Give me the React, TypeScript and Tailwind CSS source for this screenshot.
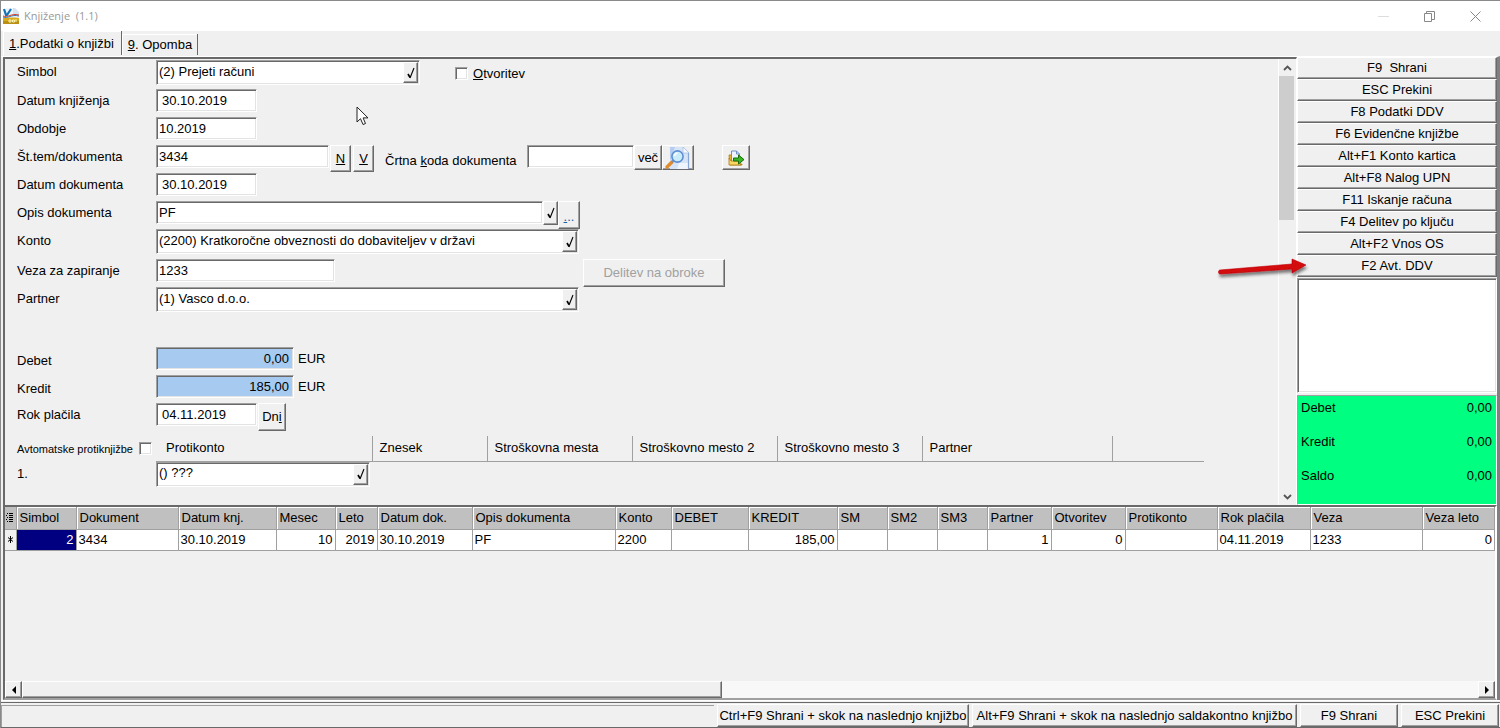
import type { ReactNode } from 'react';

const sunken =
  'border border-t-[#a0a0a0] border-l-[#a0a0a0] border-r-white border-b-white shadow-[inset_1px_1px_0_#696969,inset_-1px_-1px_0_#e3e3e3]';
const raised =
  'border border-t-white border-l-white border-r-[#696969] border-b-[#696969] shadow-[inset_-1px_-1px_0_#a0a0a0] bg-[#f0f0f0]';

const actions = [
  'F9  Shrani',
  'ESC Prekini',
  'F8 Podatki DDV',
  'F6 Evidenčne knjižbe',
  'Alt+F1 Konto kartica',
  'Alt+F8 Nalog UPN',
  'F11 Iskanje računa',
  'F4 Delitev po ključu',
  'Alt+F2 Vnos OS',
  'F2 Avt. DDV',
];

const totals = [
  { label: 'Debet', value: '0,00' },
  { label: 'Kredit', value: '0,00' },
  { label: 'Saldo', value: '0,00' },
];

const columns = [
  { title: 'Simbol', value: '2', width: 'w-[60px]', right: true },
  { title: 'Dokument', value: '3434', width: 'w-[102px]' },
  { title: 'Datum knj.', value: '30.10.2019', width: 'w-[98px]' },
  { title: 'Mesec', value: '10', width: 'w-[59px]', right: true },
  { title: 'Leto', value: '2019', width: 'w-[42px]', right: true },
  { title: 'Datum dok.', value: '30.10.2019', width: 'w-[95px]' },
  { title: 'Opis dokumenta', value: 'PF', width: 'w-[143px]' },
  { title: 'Konto', value: '2200', width: 'w-[56px]' },
  { title: 'DEBET', value: '', width: 'w-[77px]' },
  { title: 'KREDIT', value: '185,00', width: 'w-[89px]', right: true },
  { title: 'SM', value: '', width: 'w-[50px]' },
  { title: 'SM2', value: '', width: 'w-[50px]' },
  { title: 'SM3', value: '', width: 'w-[50px]' },
  { title: 'Partner', value: '1', width: 'w-[64px]', right: true },
  { title: 'Otvoritev', value: '0', width: 'w-[74px]', right: true },
  { title: 'Protikonto', value: '', width: 'w-[92px]' },
  { title: 'Rok plačila', value: '04.11.2019', width: 'w-[93px]' },
  { title: 'Veza', value: '1233', width: 'w-[112px]' },
  { title: 'Veza leto', value: '0', width: 'w-auto', right: true },
];

const counterColumns = [
  { title: 'Protikonto', width: 'w-[216px]' },
  { title: 'Znesek', width: 'w-[115px]' },
  { title: 'Stroškovna mesta', width: 'w-[145px]' },
  { title: 'Stroškovno mesto 2', width: 'w-[145px]' },
  { title: 'Stroškovno mesto 3', width: 'w-[145px]' },
  { title: 'Partner', width: 'w-[190px]' },
];

function AppIcon() {
  return (
    <svg width="16" height="16" viewBox="0 0 16 16" aria-hidden="true">
      <path d="M3 0h9l4 4v9H0V5z" fill="#eef4fa" />
      <path d="M10 0h2l4 4v3h-6z" fill="#d5e3f1" />
      <path d="M1 1l2 6h1l4-6" fill="none" stroke="#1273b8" strokeWidth="2.2" />
      <path d="M0 10c5 0 8-1 16 0v6H0z" fill="#d7ab1c" />
      <path d="M0 13h16v3H0z" fill="#b98f14" />
      <path d="M0 9c5 2 8-3 16-1" fill="none" stroke="#2d74b5" strokeWidth="1" />
      <path d="M0 8c5 2 8-3 16-1" fill="none" stroke="#d8402a" strokeWidth="1" />
      <path d="M6 12h2v2H6zM9.500 12h2v2h-2zM13 11v3" fill="none" stroke="#fff3b0" strokeWidth="1" />
    </svg>
  );
}

function CheckIcon() {
  return (
    <svg width="8" height="12" viewBox="0 0 8 12" aria-hidden="true">
      <path d="M1 7l2 3.5" fill="none" stroke="#000" strokeWidth="1.6" />
      <path d="M3 11L7 1" fill="none" stroke="#000" strokeWidth="1.1" />
    </svg>
  );
}

function MagnifierIcon() {
  return (
    <svg width="26" height="22" viewBox="0 0 26 22" aria-hidden="true">
      <path d="M5 0h14l5 5v17H5z" fill="#d6e4f8" />
      <path d="M5 0h5L5 14z" fill="#b4cdf0" />
      <path d="M18 0l6 6h-6z" fill="#f7faff" stroke="#9bb4dc" strokeWidth="0.6" />
      <path d="M14 16h9v6H12z" fill="#f0f5fd" />
      <path d="M23.500 6v16" stroke="#8aa6d6" strokeWidth="1.2" />
      <path d="M2 20l5-5" stroke="#e08a2c" strokeWidth="3.2" strokeLinecap="round" />
      <path d="M7 15l2-2" stroke="#7f8ba3" strokeWidth="2" />
      <circle cx="12.500" cy="9.500" r="5.600" fill="#c9ecfb" stroke="#5f8fd0" strokeWidth="1.6" />
      <path d="M9.500 9a3.500 3.500 0 0 1 3-3" fill="none" stroke="#fff" strokeWidth="1.5" />
    </svg>
  );
}

function ExportIcon() {
  return (
    <svg width="17" height="16" viewBox="0 0 17 16" aria-hidden="true">
      <path d="M1 5h3v9h10v1H2z" fill="#e8b52e" stroke="#a97a10" strokeWidth="0.8" />
      <path d="M3.500 1h5l3 3v9h-8z" fill="#eef4ff" stroke="#6f8fc8" strokeWidth="1" />
      <path d="M8.500 1v3h3" fill="none" stroke="#6f8fc8" strokeWidth="1" />
      <path d="M1 15V8l2 3h8l2 4z" fill="#f8d663" stroke="#a97a10" strokeWidth="0.8" />
      <path d="M5.500 8h5V5l5.500 4.600L10.500 14v-3h-5z" fill="#37b822" stroke="#176b0c" strokeWidth="1" />
    </svg>
  );
}

type RowProps = { id: string; label: string; height?: string; low?: boolean; children: ReactNode };

function Row({ id, label, height = 'h-7', low, children }: RowProps) {
  return (
    <div className={`flex items-start ${height}`}>
      <label htmlFor={id} className={`w-[139px] shrink-0 ${low ? 'leading-7' : 'leading-[23px]'}`}>
        {label}
      </label>
      {children}
    </div>
  );
}

type FieldProps = { id: string; value: string; width: string; className?: string; label?: string };

function Field({ id, value, width, className = 'bg-white px-1', label }: FieldProps) {
  return (
    <input
      id={id}
      aria-label={label}
      defaultValue={value}
      className={`h-[23px] shrink-0 outline-none ${sunken} ${width} ${className}`}
    />
  );
}

function Lookup({ id, value, width, label }: FieldProps) {
  return (
    <div className={`flex h-[25px] shrink-0 bg-white p-px ${sunken} ${width}`}>
      <input
        id={id}
        aria-label={label}
        defaultValue={value}
        className="h-[19px] min-w-0 flex-1 bg-transparent px-px outline-none"
      />
      <button aria-label="Izberi" className={`flex w-[15px] items-center justify-center ${raised}`}>
        <CheckIcon />
      </button>
    </div>
  );
}

function TitleBar() {
  return (
    <header className="flex h-[31px] shrink-0 items-center border-t border-[#8a8a8a] bg-white pr-[2px] pl-[2px]">
      <AppIcon />
      <h1 className="ml-[5px] flex-1 font-['Open_Sans',sans-serif] text-[11px] whitespace-pre text-[#999]">
        {'Knjiženje  (1.1)'}
      </h1>
      <button aria-label="Pomanjšaj" className="flex h-full w-[46px] items-center justify-center">
        <svg width="11" height="11" viewBox="0 0 11 11">
          <path d="M0 5.5h11" stroke="#ddd" />
        </svg>
      </button>
      <button aria-label="Obnovi" className="flex h-full w-[46px] items-center justify-center">
        <svg width="11" height="11" viewBox="0 0 11 11" fill="none" stroke="#888">
          <path d="M.5 2.5h7v8h-7zM2.5 2.5v-2h8v8h-3" />
        </svg>
      </button>
      <button aria-label="Zapri" className="flex h-full w-[46px] items-center justify-center">
        <svg width="11" height="11" viewBox="0 0 11 11" stroke="#888">
          <path d="M.5.5l10 10M10.5.5l-10 10" />
        </svg>
      </button>
    </header>
  );
}

function Tabs() {
  return (
    <nav className="flex h-[25px] shrink-0 items-end pb-px pl-[2px]" role="tablist">
      <button
        role="tab"
        aria-selected="true"
        className="h-6 border-t border-l border-white pr-[7px] pl-[5px] shadow-[1px_0_0_#696969]"
      >
        <u>1</u>.Podatki o knjižbi
      </button>
      <button
        role="tab"
        aria-selected="false"
        className="ml-px h-[21px] border-t border-l border-white pr-[5px] pl-[5px] shadow-[1px_0_0_#696969]"
      >
        <u>9</u>. Opomba
      </button>
    </nav>
  );
}

function EntryForm() {
  return (
    <div className="min-w-0 flex-1 pt-px pl-3">
      <Row id="simbol" label="Simbol" height="h-[29px]">
        <Lookup id="simbol" value="(2) Prejeti računi" width="w-[264px]" />
        <label className="ml-[35px] flex h-[27px] items-center gap-[5px]">
          <input type="checkbox" className={`size-[13px] appearance-none bg-white ${sunken}`} />
          <span>
            <u>O</u>tvoritev
          </span>
        </label>
      </Row>
      <Row id="datum-knj" label="Datum knjiženja">
        <Field id="datum-knj" value="30.10.2019" width="w-[101px]" className="bg-white px-[5px]" />
      </Row>
      <Row id="obdobje" label="Obdobje">
        <Field id="obdobje" value="10.2019" width="w-[101px]" className="bg-white px-[2px]" />
      </Row>
      <Row id="stevilka" label="Št.tem/dokumenta">
        <Field id="stevilka" value="3434" width="w-[173px]" className="bg-white px-[2px]" />
        <button className={`ml-px h-[27px] w-[21px] ${raised}`}>
          <u>N</u>
        </button>
        <button className={`ml-[2px] h-[27px] w-[21px] ${raised}`}>
          <u>V</u>
        </button>
        <label htmlFor="crtna" className="ml-[11px] w-[142px] leading-[31px]">
          Črtna <u>k</u>oda dokumenta
        </label>
        <Field id="crtna" value="" width="w-[107px]" />
        <button className={`h-[25px] w-7 ${raised}`}>več</button>
        <button aria-label="Išči dokument" className={`flex h-[25px] w-8 items-center justify-center ${raised}`}>
          <MagnifierIcon />
        </button>
        <button aria-label="Odpri dokument" className={`ml-7 flex h-[25px] w-7 items-center justify-center ${raised}`}>
          <ExportIcon />
        </button>
      </Row>
      <Row id="datum-dok" label="Datum dokumenta">
        <Field id="datum-dok" value="30.10.2019" width="w-[101px]" className="bg-white px-[5px]" />
      </Row>
      <Row id="opis" label="Opis dokumenta">
        <Field id="opis" value="PF" width="w-[387px]" className="bg-white px-[2px]" />
        <button aria-label="Izberi opis" className={`flex h-6 w-[15px] items-center justify-center ${raised}`}>
          <CheckIcon />
        </button>
        <button aria-label="Več o opisu" className={`h-7 w-[22px] pt-1 text-[#1a5fa8] ${raised}`}>
          <u>.</u>..
        </button>
      </Row>
      <Row id="konto" label="Konto" height="h-[30px]">
        <Lookup id="konto" value="(2200) Kratkoročne obveznosti do dobaviteljev v državi" width="w-[423px]" />
      </Row>
      <Row id="veza" label="Veza za zapiranje">
        <Field id="veza" value="1233" width="w-[179px]" className="bg-white px-[2px]" />
        <button disabled className={`ml-[248px] h-7 w-[142px] text-[#a0a0a0] ${raised}`}>
          Delitev na obroke
        </button>
      </Row>
      <Row id="partner" label="Partner" height="h-[60px]">
        <Lookup id="partner" value="(1) Vasco d.o.o." width="w-[423px]" />
      </Row>
      <Row id="debet" label="Debet" low>
        <Field id="debet" value="0,00" width="w-[138px]" className="bg-[#a6caf0] px-1 text-right" />
        <span className="ml-1 leading-[23px]">EUR</span>
      </Row>
      <Row id="kredit" label="Kredit" low>
        <Field id="kredit" value="185,00" width="w-[138px]" className="bg-[#a6caf0] px-1 text-right" />
        <span className="ml-1 leading-[23px]">EUR</span>
      </Row>
      <Row id="rok" label="Rok plačila" height="h-[33px]">
        <Field id="rok" value="04.11.2019" width="w-[101px]" className="bg-white px-[5px]" />
        <button className={`ml-px h-7 w-7 ${raised}`}>
          Dn<u>i</u>
        </button>
      </Row>
      <CounterEntries />
    </div>
  );
}

function CounterEntries() {
  return (
    <table className="w-[1187px] table-fixed border-collapse text-left">
      <thead>
        <tr className="h-[25px]">
          <th className="w-[139px] p-0 font-normal">
            <label className="flex items-center justify-between pr-1 text-[11px] whitespace-nowrap">
              Avtomatske protiknjižbe
              <input type="checkbox" className={`size-[13px] appearance-none bg-white ${sunken}`} />
            </label>
          </th>
          {counterColumns.map((column) => (
            <th
              key={column.title}
              className={`border-r border-b border-[#a0a0a0] py-0 pr-0 font-normal whitespace-nowrap ${column.width} ${
                column.title === 'Protikonto' ? 'pl-[10px]' : 'pl-[7px]'
              }`}
            >
              {column.title}
            </th>
          ))}
          <th className="border-b border-[#a0a0a0] p-0" />
        </tr>
      </thead>
      <tbody>
        <tr>
          <td className="p-0">
            <label htmlFor="protikonto">1.</label>
          </td>
          <td className="p-0">
            <Lookup id="protikonto" value="() ???" width="w-[214px]" />
          </td>
        </tr>
      </tbody>
    </table>
  );
}

function VerticalScroll() {
  return (
    <div className="flex w-[18px] shrink-0 flex-col border-l border-white pr-px">
      <button aria-label="Gor" className="flex h-[17px] w-full items-center justify-center">
        <svg width="9" height="6" viewBox="0 0 9 6" fill="none" stroke="#555" strokeWidth="1.8">
          <path d="M1 5l3.5-3.5L8 5" />
        </svg>
      </button>
      <div className="h-36 w-[15px] bg-[#cdcdcd]" />
      <div className="flex-1" />
      <button aria-label="Dol" className="flex h-[17px] w-full items-center justify-center">
        <svg width="9" height="6" viewBox="0 0 9 6" fill="none" stroke="#555" strokeWidth="1.8">
          <path d="M1 1l3.5 3.5L8 1" />
        </svg>
      </button>
    </div>
  );
}

function Sidebar() {
  return (
    <aside className="flex w-[200px] shrink-0 flex-col">
      {actions.map((action) => (
        <button key={action} className={`h-[22px] shrink-0 whitespace-pre ${raised}`}>
          {action}
        </button>
      ))}
      <textarea aria-label="Sporočila" className={`mt-px h-[115px] resize-none bg-white outline-none ${sunken}`} />
      <dl className="mt-[2px] flex flex-1 flex-col gap-[14px] border border-[#a0a0a0] border-r-white border-b-white bg-[#00ff80] px-[3px] pt-[2px]">
        {totals.map((total) => (
          <div key={total.label} className="flex justify-between pr-px">
            <dt>{total.label}</dt>
            <dd>{total.value}</dd>
          </div>
        ))}
      </dl>
    </aside>
  );
}

function EntryTable() {
  return (
    <table className="w-full table-fixed border-collapse text-left">
      <thead>
        <tr className="h-[22px] bg-[#c0c0c0]">
          <th className="w-[11px] border-r border-b border-[#a0a0a0] p-0">
            <svg width="8" height="10" viewBox="0 0 8 10" className="mx-auto" stroke="#000" aria-hidden="true">
              <path d="M1 .5h1M3 .5h4M0 2.5h1M3 2.5h4M1 4.5h1M3 4.5h4M0 6.5h1M3 6.5h4M1 8.5h1M3 8.5h4" />
            </svg>
          </th>
          {columns.map((column) => (
            <th
              key={column.title}
              className={`border-r border-b border-[#a0a0a0] py-0 pr-0 pl-[3px] font-normal whitespace-nowrap shadow-[inset_1px_1px_0_#fff] ${column.width}`}
            >
              {column.title}
            </th>
          ))}
        </tr>
      </thead>
      <tbody>
        <tr className="h-[21px] bg-white">
          <td className="border-r border-b border-[#a0a0a0] bg-[#f0f0f0] p-0">
            <svg width="7" height="7" viewBox="0 0 7 7" className="mx-auto" stroke="#000" aria-hidden="true">
              <path d="M3.5 0v7M1 1.5l5 4M6 1.5l-5 4" />
            </svg>
          </td>
          {columns.map((column, index) => (
            <td
              key={column.title}
              className={`border-r border-b border-[#a0a0a0] px-[2px] py-0 ${column.right ? 'text-right' : ''} ${
                index === 0 ? 'bg-[#000080] text-white' : ''
              }`}
            >
              {column.value}
            </td>
          ))}
        </tr>
      </tbody>
    </table>
  );
}

function HorizontalScroll() {
  return (
    <div className="flex h-[17px] shrink-0 bg-[#f8f8f8]">
      <button aria-label="Levo" className={`flex w-[17px] items-center justify-center ${raised}`}>
        <svg width="4" height="8" viewBox="0 0 4 8">
          <path d="M4 0v8L0 4z" />
        </svg>
      </button>
      <div className={`w-[47%] ${raised}`} />
      <div className="flex-1" />
      <button aria-label="Desno" className={`flex w-[17px] items-center justify-center ${raised}`}>
        <svg width="4" height="8" viewBox="0 0 4 8">
          <path d="M0 0v8l4-4z" />
        </svg>
      </button>
    </div>
  );
}

function StatusBar() {
  return (
    <footer className="flex h-[25px] shrink-0 gap-[3px] border-b border-[#696969] pt-px pr-px">
      <div className="mt-px flex-1 border-t border-l border-[#a0a0a0]" />
      <button className={`w-[252px] whitespace-nowrap ${raised}`}>Ctrl+F9 Shrani + skok na naslednjo knjižbo</button>
      <button className={`w-[325px] whitespace-nowrap ${raised}`}>
        Alt+F9 Shrani + skok na naslednjo saldakontno knjižbo
      </button>
      <button className={`w-[98px] ${raised}`}>F9 Shrani</button>
      <button className={`w-[98px] ${raised}`}>ESC Prekini</button>
    </footer>
  );
}

export default function App() {
  return (
    <div className="relative flex min-h-screen flex-col border-l border-[#8a8a8a] bg-[#f0f0f0] font-['Liberation_Sans',Arial,sans-serif] text-[13px] leading-5 text-black">
      <TitleBar />
      <Tabs />
      <main className="flex flex-1 flex-col border-t border-r-3 border-t-white border-r-[#808080] pl-[2px]">
        <div className="flex h-[448px] shrink-0">
          <section className="flex min-w-0 flex-1 border-t-2 border-l-2 border-[#696969] border-r border-r-white">
            <EntryForm />
            <VerticalScroll />
          </section>
          <Sidebar />
        </div>
        <section className="flex flex-1 flex-col justify-between border-t-2 border-r-2 border-b-2 border-l-2 border-t-[#696969] border-r-white border-b-[#a0a0a0] border-l-[#696969]">
          <EntryTable />
          <HorizontalScroll />
        </section>
      </main>
      <div className="h-[3px] shrink-0 border-t border-b border-t-white border-b-[#696969]" />
      <StatusBar />

      <svg className="absolute top-[106px] left-[355px]" width="13" height="20" viewBox="0 0 13 20" aria-hidden="true">
        <path d="M1 1v15l3.5-3.3L7 18.5l2.5-1-2.4-5.6H12z" fill="#fff" stroke="#222" />
      </svg>
      <svg className="absolute top-[256px] right-[191px]" width="92" height="28" viewBox="0 0 92 28" aria-hidden="true">
        <defs>
          <filter id="soft" x="-10%" y="-30%" width="120%" height="180%">
            <feDropShadow dx="1" dy="3" stdDeviation="1.5" floodOpacity="0.5" />
          </filter>
        </defs>
        <path
          d="M3 14L75 8V3l14 6-14 8v-4L3 18c-2 0-2-4 0-4z"
          fill="#d3080c"
          stroke="#c00508"
          strokeWidth="0.6"
          filter="url(#soft)"
        />
      </svg>
    </div>
  );
}
